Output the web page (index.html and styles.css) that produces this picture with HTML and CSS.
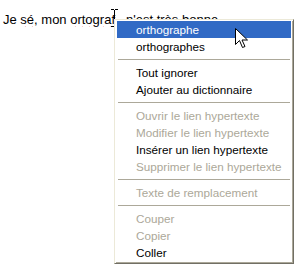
FILE: index.html
```html
<!doctype html>
<html>
<head>
	<meta charset="utf-8">
	<title>Menu contextuel</title>
	<link rel="stylesheet" href="styles.css">
</head>
<body>
	<p class="doc">Je <span class="typo">sé</span>, mon <span class="typo">ortograf</span><span class="rest">n'est très bonne</span></p>

	<svg class="ibeam" width="9" height="18" viewBox="0 0 9 18">
		<path d="M1 0.5h3M5 0.5h3M4.5 1v16M1 17.5h3M5 17.5h3" stroke="#000" fill="none"/>
	</svg>

	<div class="menu">
		<div class="item hot">orthographe</div>
		<div class="item">orthographes</div>
		<div class="sep"></div>
		<div class="item">Tout ignorer</div>
		<div class="item">Ajouter au dictionnaire</div>
		<div class="sep"></div>
		<div class="item off">Ouvrir le lien hypertexte</div>
		<div class="item off">Modifier le lien hypertexte</div>
		<div class="item">Insérer un lien hypertexte</div>
		<div class="item off">Supprimer le lien hypertexte</div>
		<div class="sep"></div>
		<div class="item off">Texte de remplacement</div>
		<div class="sep"></div>
		<div class="item off">Couper</div>
		<div class="item off">Copier</div>
		<div class="item">Coller</div>
	</div>

	<svg class="pointer" width="13" height="21" viewBox="0 0 13 21">
		<path d="M0.5 0.5v16l4-4 3 7 2.5-1-3-6.5h5.5z" fill="#fff" stroke="#000" stroke-linejoin="miter"/>
	</svg>
</body>
</html>
```

FILE: styles.css
```css
body {
	margin: 0;
	background: #fff;
	font-family: "Liberation Sans", Arial, sans-serif;
	color: #000;
}

.doc {
	margin: 0;
	padding: 12px 0 0 3px;
	font-size: 13px;
	line-height: 15px;
	white-space: nowrap;
}

.typo {
	text-decoration: underline wavy #e00000;
	text-decoration-thickness: 1px;
	text-underline-offset: 2px;
}

.rest {
	margin-left: 11px;
}

.ibeam {
	position: absolute;
	left: 110px;
	top: 9px;
}

.menu {
	position: absolute;
	left: 114px;
	top: 19px;
	width: 180px;
	box-sizing: border-box;
	padding: 1px 2px 2px;
	background: #fff;
	border: 1px solid;
	border-color: #ece9d8 #716f64 #716f64 #ece9d8;
	box-shadow: inset 1px 1px #fff, inset -1px -1px #aca899;
	font-size: 11.7px;
}

.item {
	height: 17px;
	line-height: 17px;
	padding-left: 19px;
	white-space: nowrap;
}

.item.hot {
	background: #316ac5;
	color: #fff;
}

.item.off {
	color: #aca899;
}

.sep {
	height: 1px;
	margin: 4px 1px;
	background: #aca899;
}

.pointer {
	position: absolute;
	left: 235px;
	top: 28px;
}
```
